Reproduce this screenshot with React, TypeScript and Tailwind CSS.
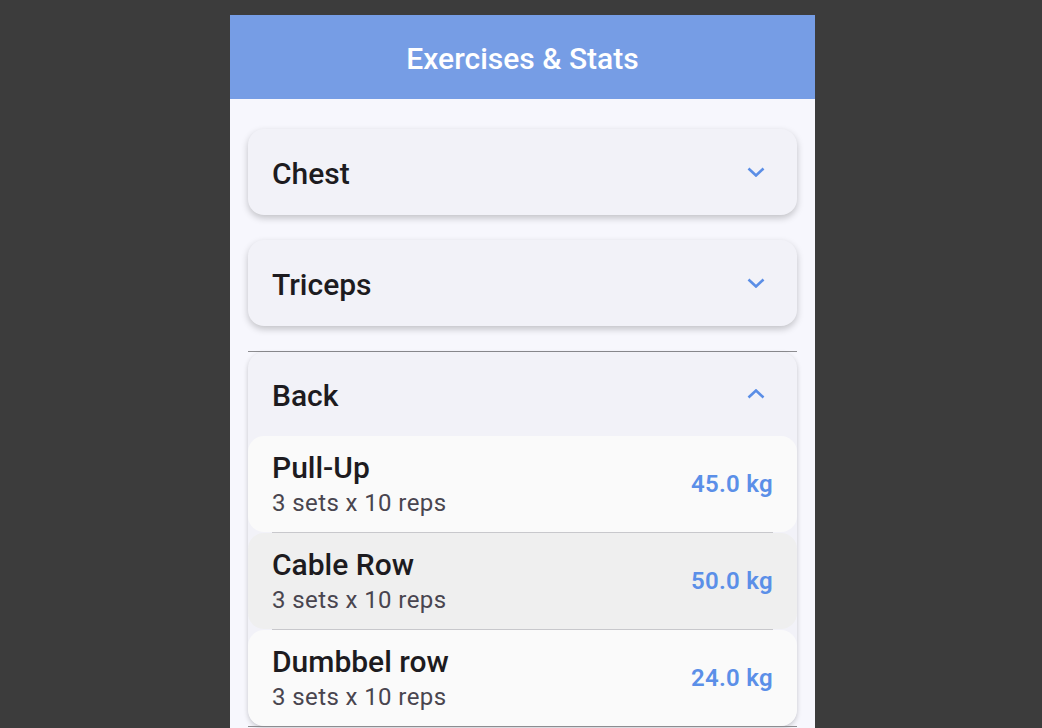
import React from "react";

type Exercise = {
  name: string;
  detail: string;
  weight: string;
  bg: string;
};

const exercises: Exercise[] = [
  { name: "Pull-Up", detail: "3 sets x 10 reps", weight: "45.0 kg", bg: "bg-[#fafafa]" },
  { name: "Cable Row", detail: "3 sets x 10 reps", weight: "50.0 kg", bg: "bg-[#efefef]" },
  { name: "Dumbbel row", detail: "3 sets x 10 reps", weight: "24.0 kg", bg: "bg-[#fafafa]" },
];

const Chevron = ({ up }: { up?: boolean }) => (
  <svg width="18" height="10" viewBox="0 0 18 10" className="mr-[6px]">
    <polyline
      points={up ? "1.5,8.5 9,1.5 16.5,8.5" : "1.5,1.5 9,8.5 16.5,1.5"}
      fill="none"
      stroke="#5b8ee6"
      strokeWidth="2.6"
    />
  </svg>
);

const CollapsedGroup = ({ title }: { title: string }) => (
  <div className="flex h-[86px] items-center justify-between rounded-2xl bg-[#f2f2f8] pl-6 pr-[26px] shadow-[0_3px_7px_rgba(0,0,0,0.22)]">
    <span className="pt-[3px] text-[30px] font-medium text-[#1d1b20]">{title}</span>
    <Chevron />
  </div>
);

export default function App() {
  return (
    <div
      className="flex min-h-screen justify-start bg-[#3c3c3c] pl-[230px] pt-[15px]"
      style={{ fontFamily: "Roboto, 'Noto Sans', sans-serif" }}
    >
      <div className="h-[713px] w-[585px] overflow-hidden bg-[#f7f7fd]">
        <header className="flex h-[84px] items-center justify-center bg-[#769de5] pt-[3px]">
          <h1 className="text-[30px] font-medium text-white">Exercises &amp; Stats</h1>
        </header>

        <div className="px-[18px] pt-[30px]">
          <CollapsedGroup title="Chest" />
          <div className="mt-[25px]">
            <CollapsedGroup title="Triceps" />
          </div>

          <div className="mt-[25px] h-px bg-[#8c8c90]" />

          <div className="overflow-hidden rounded-2xl bg-[#f2f2f8] shadow-[0_2px_5px_rgba(0,0,0,0.2)]">
            <div className="flex h-[84px] items-center justify-between pl-6 pr-[26px]">
              <span className="pt-[3px] text-[30px] font-medium text-[#1d1b20]">Back</span>
              <Chevron up />
            </div>
            {exercises.map((ex, i) => (
              <div key={ex.name}>
                {i > 0 && <div className="mx-6 h-px bg-[#c8c8cc]" />}
                <div
                  className={`flex h-[96px] items-center justify-between rounded-2xl px-6 ${ex.bg}`}
                >
                  <div className="flex flex-col pt-[2px]">
                    <span className="text-[30px] font-medium leading-[36px] text-[#1d1b20]">
                      {ex.name}
                    </span>
                    <span className="text-[24px] leading-[34px] tracking-[0.4px] text-[#49454f]">
                      {ex.detail}
                    </span>
                  </div>
                  <span className="text-[24px] font-semibold tracking-[0.3px] text-[#5b8fe8]">
                    {ex.weight}
                  </span>
                </div>
              </div>
            ))}
          </div>
          <div className="h-px bg-[#8c8c90]" />
        </div>
      </div>
    </div>
  );
}
